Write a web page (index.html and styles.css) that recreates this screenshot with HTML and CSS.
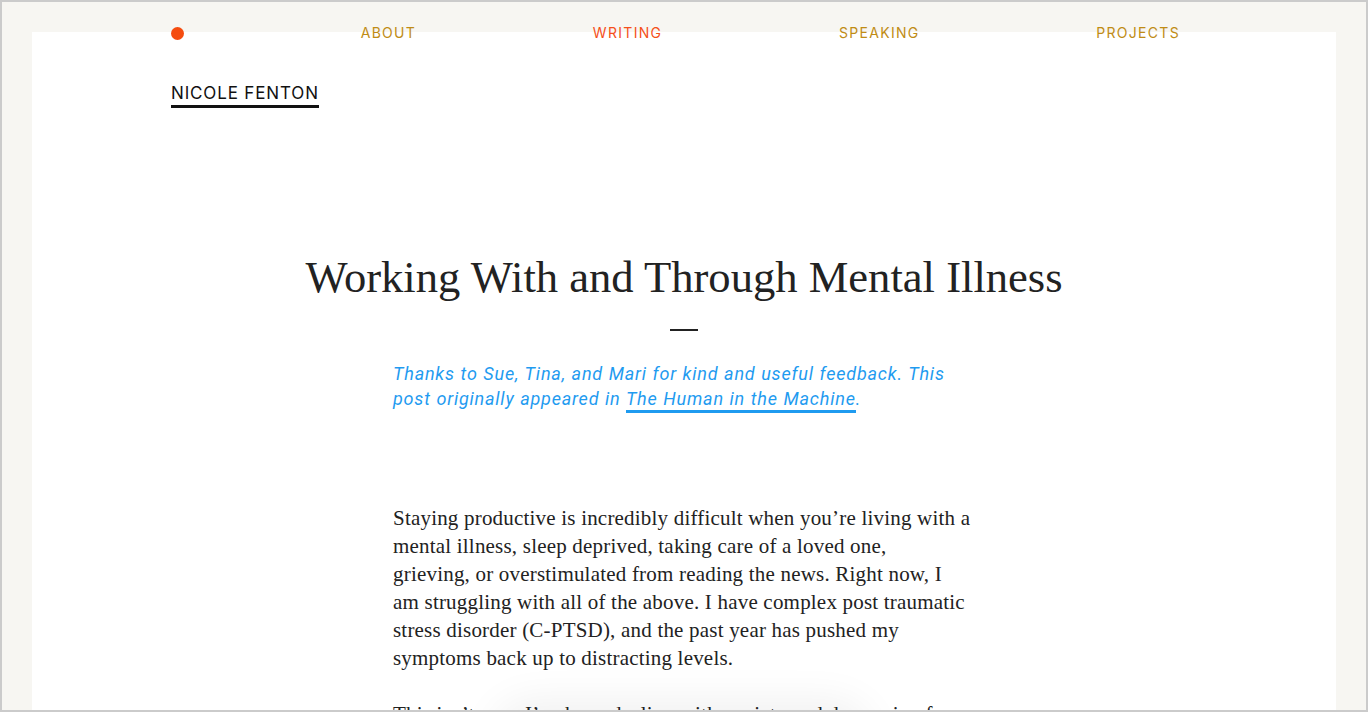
FILE: index.html
```html
<!DOCTYPE html>
<html lang="en">
<head>
<meta charset="utf-8">
<title>Working With and Through Mental Illness — Nicole Fenton</title>
<link rel="stylesheet" href="styles.css">
</head>
<body>
<div class="frame">
  <div class="sheet">
    <div class="panel">
      <header class="header">
        <nav class="nav">
          <a class="home-dot" href="#" aria-label="Home"></a>
          <a class="nav-link" href="#">ABOUT</a>
          <a class="nav-link active" href="#">WRITING</a>
          <a class="nav-link" href="#">SPEAKING</a>
          <a class="nav-link" href="#">PROJECTS</a>
        </nav>
        <a class="site-name" href="#">NICOLE FENTON</a>
      </header>
      <main class="article">
        <h1 class="title">Working With and Through Mental Illness</h1>
        <div class="rule"></div>
        <p class="note">Thanks to Sue, Tina, and Mari for kind and useful feedback. This post originally appeared in <a href="#">The Human in the Machine</a>.</p>
        <div class="body">
          <p>Staying productive is incredibly difficult when you’re living with a mental illness, sleep deprived, taking care of a loved one, grieving,&nbsp;or overstimulated from reading the news. Right now, I am&nbsp;struggling with all of the above. I have complex post traumatic stress disorder (C-PTSD), and the past year has pushed my symptoms back up to distracting levels.</p>
          <p>This isn’t new. I’ve been dealing with anxiety and depression for most of my life, and I’ve learned a few things along the way.</p>
        </div>
      </main>
    </div>
  </div>
  <div class="bottom-glow"></div>
</div>
</body>
</html>
```

FILE: styles.css
```css
* { box-sizing: border-box; }
html, body { margin: 0; padding: 0; }
body { background: #ffffff; }

.frame {
  position: relative;
  width: 1368px;
  height: 712px;
  border: 2px solid #cbcbcb;
  overflow: hidden;
  background: #f7f6f2;
}

.sheet {
  padding: 30px 30px 0 30px;
  height: 100%;
}

.panel {
  background: #ffffff;
  height: 100%;
}

.header {
  width: 1009px;
  margin: 0 0 0 139px;
  position: relative;
  top: -7px;
}

.nav {
  display: flex;
  justify-content: space-between;
  align-items: center;
  height: 16px;
  font-family: "Inter", "Liberation Sans", sans-serif;
  font-size: 14px;
  letter-spacing: 1.3px;
}

.home-dot {
  display: block;
  width: 13px;
  height: 13px;
  border-radius: 50%;
  background: #f54c0f;
  margin-top: 1px;
}

.nav-link {
  color: #c08c15;
  text-decoration: none;
  line-height: 16px;
}
.nav-link.active { color: #f5501a; }

.site-name {
  display: inline-block;
  margin-top: 42px;
  font-family: "Inter", "Liberation Sans", sans-serif;
  font-size: 17px;
  letter-spacing: 0.85px;
  color: #111111;
  text-decoration: none;
  line-height: 20px;
  padding-bottom: 2px;
  border-bottom: 3px solid #111111;
}

.article {
  width: 580px;
  margin: 0 0 0 361px;
}

.title {
  margin: 136px -222px 0 -220px;
  text-align: center;
  font-family: "Liberation Serif", serif;
  font-weight: normal;
  font-size: 44.6px;
  line-height: 52px;
  color: #222222;
}

.rule {
  width: 28px;
  height: 2px;
  background: #222222;
  margin: 26px 0 0 277px;
}

.note {
  margin: 30px 0 0;
  font-family: "Roboto", "Liberation Sans", sans-serif;
  font-style: italic;
  font-size: 18px;
  line-height: 25px;
  letter-spacing: 0.8px;
  word-spacing: 0.5px;
  color: #1f9bf0;
}
.note a {
  color: #1f9bf0;
  text-decoration: none;
  border-bottom: 3px solid #1f9bf0;
  padding-bottom: 1px;
}

.body {
  margin-top: 93px;
  font-family: "Liberation Serif", serif;
  font-size: 21px;
  line-height: 28px;
  letter-spacing: 0.2px;
  color: #222222;
}
.body p { margin: 0 0 28px; }

.bottom-glow {
  position: absolute;
  left: 500px;
  bottom: -60px;
  width: 360px;
  height: 60px;
  border-radius: 30px;
  box-shadow: 0 0 40px 10px rgba(0, 0, 0, 0.06);
}
```
